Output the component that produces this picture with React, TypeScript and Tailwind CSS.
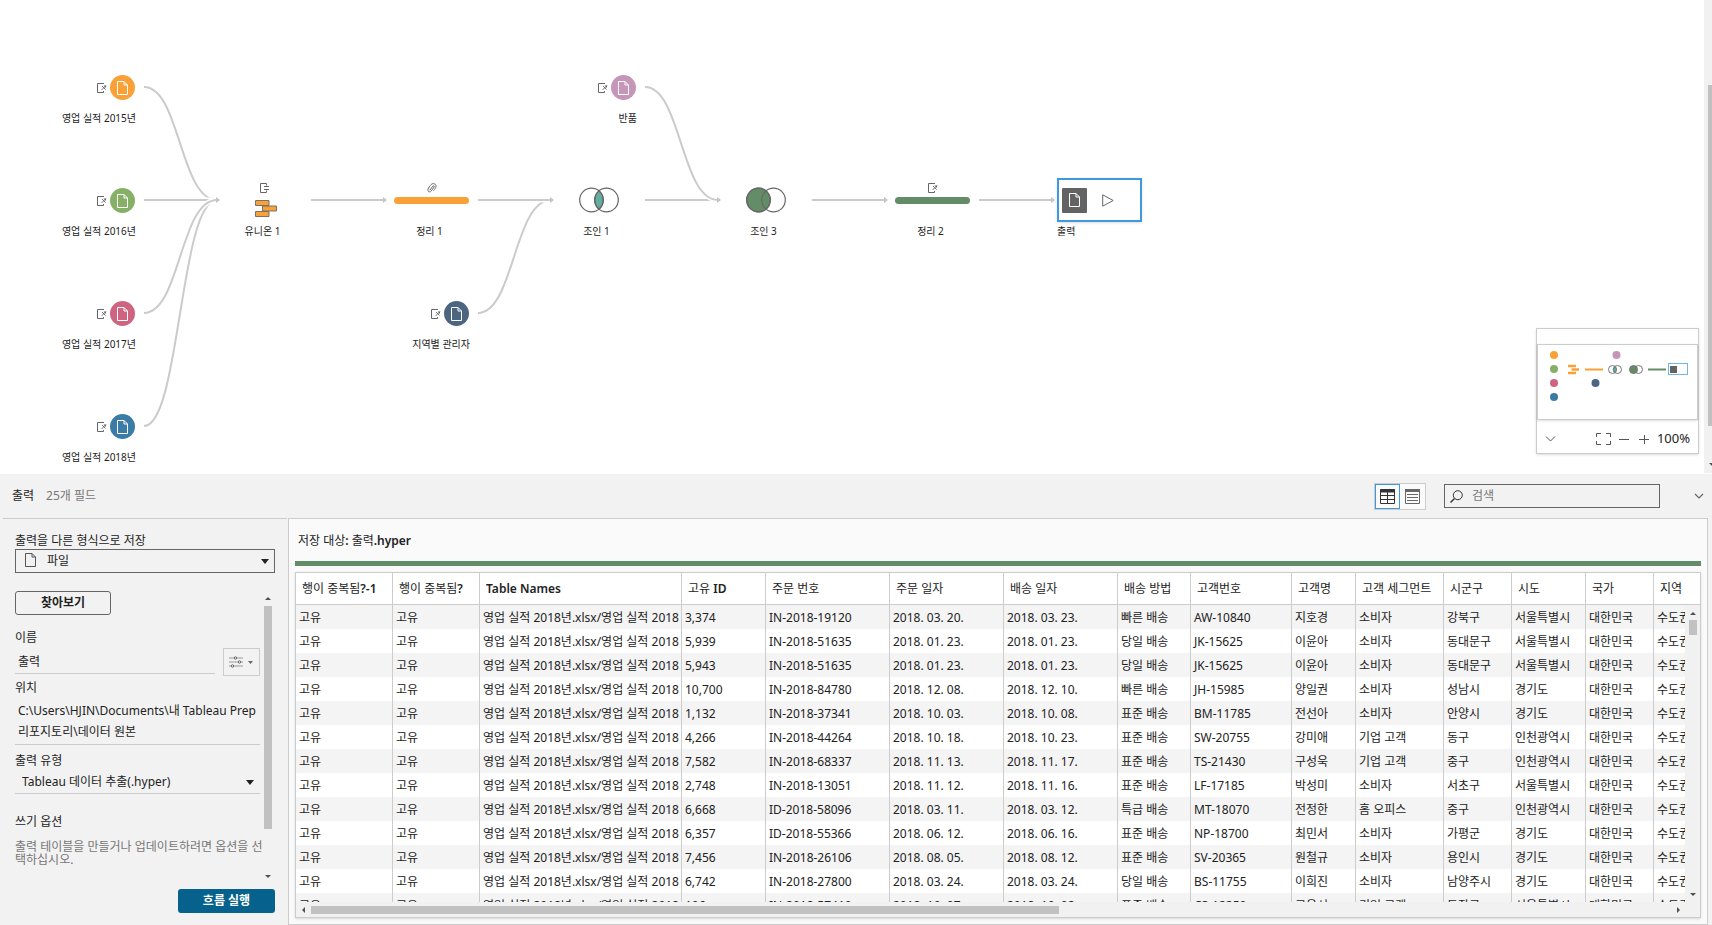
import { useState } from "react";
import type { ReactNode } from "react";
import clsx from "clsx";

type Badge = "edit" | "merge" | "clip";

const columns = [
  { name: "행이 중복됨?-1", width: "w-[97px]" },
  { name: "행이 중복됨?", width: "w-[87px]" },
  { name: "Table Names", width: "w-[202px]" },
  { name: "고유 ID", width: "w-[84px]" },
  { name: "주문 번호", width: "w-[124px]" },
  { name: "주문 일자", width: "w-[114px]" },
  { name: "배송 일자", width: "w-[114px]" },
  { name: "배송 방법", width: "w-[73px]" },
  { name: "고객번호", width: "w-[101px]" },
  { name: "고객명", width: "w-[64px]" },
  { name: "고객 세그먼트", width: "w-[88px]" },
  { name: "시군구", width: "w-[68px]" },
  { name: "시도", width: "w-[74px]" },
  { name: "국가", width: "w-[68px]" },
  { name: "지역", width: "w-[80px]" },
];

const orders = [
  ["3,374", "IN-2018-19120", "2018. 03. 20.", "2018. 03. 23.", "빠른 배송", "AW-10840", "지호경", "소비자", "강북구", "서울특별시"],
  ["5,939", "IN-2018-51635", "2018. 01. 23.", "2018. 01. 23.", "당일 배송", "JK-15625", "이윤아", "소비자", "동대문구", "서울특별시"],
  ["5,943", "IN-2018-51635", "2018. 01. 23.", "2018. 01. 23.", "당일 배송", "JK-15625", "이윤아", "소비자", "동대문구", "서울특별시"],
  ["10,700", "IN-2018-84780", "2018. 12. 08.", "2018. 12. 10.", "빠른 배송", "JH-15985", "양일권", "소비자", "성남시", "경기도"],
  ["1,132", "IN-2018-37341", "2018. 10. 03.", "2018. 10. 08.", "표준 배송", "BM-11785", "전선아", "소비자", "안양시", "경기도"],
  ["4,266", "IN-2018-44264", "2018. 10. 18.", "2018. 10. 23.", "표준 배송", "SW-20755", "강미애", "기업 고객", "동구", "인천광역시"],
  ["7,582", "IN-2018-68337", "2018. 11. 13.", "2018. 11. 17.", "표준 배송", "TS-21430", "구성욱", "기업 고객", "중구", "인천광역시"],
  ["2,748", "IN-2018-13051", "2018. 11. 12.", "2018. 11. 16.", "표준 배송", "LF-17185", "박성미", "소비자", "서초구", "서울특별시"],
  ["6,668", "ID-2018-58096", "2018. 03. 11.", "2018. 03. 12.", "특급 배송", "MT-18070", "전정한", "홈 오피스", "중구", "인천광역시"],
  ["6,357", "ID-2018-55366", "2018. 06. 12.", "2018. 06. 16.", "표준 배송", "NP-18700", "최민서", "소비자", "가평군", "경기도"],
  ["7,456", "IN-2018-26106", "2018. 08. 05.", "2018. 08. 12.", "표준 배송", "SV-20365", "원철규", "소비자", "용인시", "경기도"],
  ["6,742", "IN-2018-27800", "2018. 03. 24.", "2018. 03. 24.", "당일 배송", "BS-11755", "이희진", "소비자", "남양주시", "경기도"],
  ["196", "IN-2018-57410", "2018. 10. 07.", "2018. 10. 08.", "표준 배송", "CS-12250", "고윤서", "기업 고객", "동작구", "서울특별시"],
];

const sources: { label: string; pos: string; color: string }[] = [
  { label: "영업 실적 2015년", pos: "left-[56px] top-[75px]", color: "bg-[#f9a137]" },
  { label: "영업 실적 2016년", pos: "left-[56px] top-[188px]", color: "bg-[#86b067]" },
  { label: "영업 실적 2017년", pos: "left-[56px] top-[301px]", color: "bg-[#ce647f]" },
  { label: "영업 실적 2018년", pos: "left-[56px] top-[414px]", color: "bg-[#3b7ca7]" },
  { label: "지역별 관리자", pos: "left-[390px] top-[301px]", color: "bg-[#4c6580]" },
  { label: "반품", pos: "left-[557px] top-[75px]", color: "bg-[#c596b7]" },
];

// Later edges sit on top and cut a white gap into the ones below
const edges = [
  "M144 426C180 426 180 200 217 200",
  "M144 87C180 87 180 200 217 200",
  "M144 200H217",
  "M144 313C180 313 180 200 217 200",
  "M311 200H384",
  "M478 313C514 313 514 200 551 200",
  "M478 200H551",
  "M645 200H718",
  "M645 87C681 87 681 200 718 200",
  "M812 200H885",
  "M979 200H1052",
];

const arrows = [216, 383, 550, 717, 884, 1051];

function PageIcon({ className }: { className?: string }) {
  return (
    <svg className={className} width="11" height="14" viewBox="0 0 11 14" fill="none" stroke="currentColor" strokeWidth="1">
      <path d="M.5.5H7L10.500 4V13.500H.5z" />
      <path d="M7 .5V4H10.500" />
    </svg>
  );
}

function BadgeIcon({ kind }: { kind: Badge }) {
  if (kind === "clip") {
    return (
      <svg width="10" height="10" viewBox="0 0 10 10" fill="none" stroke="#666" strokeWidth="1" strokeLinecap="round">
        <path d="M3 6.800L5.800 3.200C6.500 2.300 7.700 3.200 7 4.100L4.200 8C3 9.700.2 8.700 1 6.200C1.300 5 3.200 2.500 4.200 1.500C6 -.3 9.300.8 9 3.500C8.900 4.600 7.800 6.200 6.800 7.300" />
      </svg>
    );
  }
  return (
    <svg width="10" height="10" viewBox="0 0 10 10" fill="none" stroke="#666" strokeWidth="1">
      {kind === "merge" ? (
        <path d="M6.500 2.500V.5H.5V9.500H6.500V7.500M4 3.500H9M4 6.500H9" />
      ) : (
        <>
          <path d="M7 .5H.5V9.500H6.500V8" />
          <path d="M5 3L8.500 6.500M9 2.500L4.500 7" strokeWidth=".9" />
          <path d="M6.500 2.500H9V5z" fill="#666" stroke="none" />
        </>
      )}
    </svg>
  );
}

function SourceNode({ label, pos, color }: { label: string; pos: string; color: string }) {
  return (
    <button className={clsx("absolute flex w-20 flex-col items-end", pos)}>
      <span className="mr-px flex items-center gap-[3px]">
        <BadgeIcon kind="edit" />
        <span className={clsx("flex size-[25px] items-center justify-center rounded-full text-white", color)}>
          <PageIcon />
        </span>
      </span>
      <span className="mt-2.5 text-[10px] leading-4 whitespace-nowrap">{label}</span>
    </button>
  );
}

function StepNode({ label, pos, badge, children }: { label: string; pos: string; badge?: Badge; children: ReactNode }) {
  return (
    <button className={clsx("absolute flex w-[75px] flex-col items-center", pos)}>
      {badge && <BadgeIcon kind={badge} />}
      <span className={clsx("flex w-full justify-center", badge ? "h-[30px]" : "h-9")}>{children}</span>
      <span className="pr-1 text-[10px] leading-4 whitespace-nowrap">{label}</span>
    </button>
  );
}

function Venn({ inner }: { inner?: boolean }) {
  return (
    <svg width="40" height="26" viewBox="0 0 40 26" fill="none" stroke="#666" strokeWidth="1.2">
      {!inner && <circle cx="12.500" cy="13" r="11.800" fill="#638d66" />}
      {inner && <path d="M20 3.900A11.800 11.800 0 0 1 20 22.100A11.800 11.800 0 0 1 20 3.900z" fill="#62ae9f" />}
      <circle cx="12.500" cy="13" r="11.800" />
      <circle cx="27.500" cy="13" r="11.800" />
    </svg>
  );
}

function Minimap() {
  return (
    <div className="absolute right-[13px] bottom-5 w-[163px] border border-[#ccc] bg-white shadow-sm">
      <div className="mt-[15px] border border-[#ccc] shadow-sm">
        <svg className="block w-full" height="74" viewBox="0 0 159 74" fill="none">
          <circle cx="16" cy="10" r="4" fill="#f9a137" />
          <circle cx="16" cy="24" r="4" fill="#86b067" />
          <circle cx="16" cy="38" r="4" fill="#ce647f" />
          <circle cx="16" cy="52" r="4" fill="#3b7ca7" />
          <circle cx="78.500" cy="10" r="4" fill="#c596b7" />
          <circle cx="57.500" cy="38" r="4" fill="#4c6580" />
          <path d="M30 21H38M33.500 24.500H41M30 28H38" stroke="#f9a137" strokeWidth="2.400" />
          <path d="M47 24.500H65" stroke="#f9a137" strokeWidth="2" />
          <path d="M110 24.500H128" stroke="#638d66" strokeWidth="2" />
          <path d="M76.800 21A4 4 0 0 1 76.800 28A4 4 0 0 1 76.800 21z" fill="#62ae9f" />
          <circle cx="95.500" cy="24.500" r="4" fill="#638d66" />
          <g stroke="#777">
            <circle cx="74.500" cy="24.500" r="4" />
            <circle cx="79.500" cy="24.500" r="4" />
            <circle cx="95.500" cy="24.500" r="4" />
            <circle cx="100.500" cy="24.500" r="4" />
          </g>
          <rect x="130.500" y="18.500" width="19" height="11" fill="#fff" stroke="#6fb5ea" />
          <rect x="132" y="21" width="7" height="7" fill="#636363" />
        </svg>
      </div>
      <div className="flex h-[33px] items-center px-2 pt-1 text-[#555]">
        <button aria-label="접기">
          <svg width="11" height="8" viewBox="0 0 11 8" fill="none" stroke="currentColor"><path d="M1 1.500L5.500 6L10 1.500" /></svg>
        </button>
        <button aria-label="화면에 맞추기" className="ml-auto">
          <svg width="15" height="12" viewBox="0 0 15 12" fill="none" stroke="currentColor">
            <path d="M.5 4V.5H5M10 .5H14.500V4M14.500 8V11.500H10M5 11.500H.5V8" />
          </svg>
        </button>
        <button aria-label="축소" className="ml-2">
          <svg width="10" height="10" viewBox="0 0 10 10" stroke="currentColor"><path d="M0 5.500H10" /></svg>
        </button>
        <button aria-label="확대" className="ml-2.5">
          <svg width="10" height="10" viewBox="0 0 10 10" stroke="currentColor"><path d="M0 5.500H10M5.500 1V10" /></svg>
        </button>
        <span className="ml-2 text-[13px] text-[#222]">100%</span>
      </div>
    </div>
  );
}

function FlowCanvas() {
  return (
    <section className="relative min-h-[470px] grow overflow-hidden bg-white">
      <svg className="absolute top-0 left-0" width="1200" height="470" fill="none">
        {edges.map((d) => (
          <g key={d}>
            <path d={d} stroke="#fff" strokeWidth="5" />
            <path d={d} stroke="#cbcbcb" strokeWidth="2" />
          </g>
        ))}
        {arrows.map((x) => (
          <path key={x} d={`M${x} 197L${x + 4} 200L${x} 203z`} fill="#c4c4c4" />
        ))}
      </svg>

      {sources.map((s) => (
        <SourceNode key={s.label} {...s} />
      ))}

      <StepNode label="유니온 1" pos="left-[227px] top-[183px]" badge="merge">
        <svg className="mt-[7px] ml-0.5" width="22" height="17" viewBox="0 0 22 17" fill="#f9a137" stroke="#77736b">
          <path d="M.5.500H14V5.500H.5zM.5 11.500H14V16.500H.5zM7.500 6H21.500V11H7.500z" />
        </svg>
      </StepNode>
      <StepNode label="정리 1" pos="left-[394px] top-[183px]" badge="clip">
        <span className="mt-1 h-[7px] w-full rounded-full bg-[#f9a137]" />
      </StepNode>
      <StepNode label="조인 1" pos="left-[561px] top-[187px]">
        <Venn inner />
      </StepNode>
      <StepNode label="조인 3" pos="left-[728px] top-[187px]">
        <Venn />
      </StepNode>
      <StepNode label="정리 2" pos="left-[895px] top-[183px]" badge="edit">
        <span className="mt-1 h-[7px] w-full rounded-full bg-[#638d66]" />
      </StepNode>

      {/* Output step, selected */}
      <div className="absolute top-[178px] left-[1057px]">
        <div className="flex h-11 w-[85px] items-center border-2 border-[#3e99de] bg-white pl-[3px] shadow">
          <span className="flex size-[25px] items-center justify-center rounded-[1px] bg-[#636363] text-white">
            <PageIcon />
          </span>
          <button aria-label="흐름 실행" className="ml-[15px]">
            <svg width="12" height="13" viewBox="0 0 12 13" fill="none" stroke="#666"><path d="M.7.800L11.200 6.500L.7 12.200z" /></svg>
          </button>
        </div>
        <span className="block text-[10px] leading-[18px]">출력</span>
      </div>

      <Minimap />

      {/* Scroll bar */}
      <div className="absolute top-0 right-0 bottom-px w-2 bg-[#f1f1f1]">
        <div className="absolute top-[85px] right-0 bottom-[47px] w-1 bg-[#c1c1c1]" />
        <svg className="absolute right-0 bottom-1.5" width="3" height="4" fill="#505050"><path d="M0 0H3V3z" /></svg>
      </div>
    </section>
  );
}

function Caret({ className }: { className?: string }) {
  return (
    <svg className={className} width="8" height="5" viewBox="0 0 8 5" fill="currentColor">
      <path d="M0 0H8L4 5z" />
    </svg>
  );
}

// Hangul stays regular, Latin runs are set heavier
function Title({ text }: { text: string }) {
  return text.split(/([\x21-\x7e]+)/).map((part, i) => (i % 2 ? <span key={i} className="font-semibold">{part}</span> : part));
}

function Sidebar() {
  const [name, setName] = useState("출력");
  return (
    <aside className="w-[284px] shrink-0 border-t border-[#ccc] p-3">
      <label htmlFor="save-as" className="block pt-0.5 leading-4">출력을 다른 형식으로 저장</label>
      <div className="relative">
        <select id="save-as" className="block h-6 w-full appearance-none border border-[#666] pl-[31px] outline-none">
          <option>파일</option>
        </select>
        <PageIcon className="absolute top-1 left-2.5 text-[#555]" />
        <Caret className="absolute top-2.5 right-1.5" />
      </div>

      <div className="mt-[18px] flex">
        <div className="min-w-0 grow pb-[18px]">
          <button className="block h-6 w-24 rounded-[3px] border border-[#666] font-bold">찾아보기</button>
          <label htmlFor="name" className="mt-3 block pt-px leading-5">이름</label>
          <div className="flex items-start justify-between gap-2">
            <input
              id="name"
              value={name}
              onChange={(e) => setName(e.target.value)}
              className="h-[26px] min-w-0 grow border-b border-[#ccc] px-[3px] outline-none"
            />
            <button aria-label="매개 변수" className="flex h-7 w-[37px] items-center justify-between border border-[#ccc] pr-1.5 pl-[5px] text-[#666]">
              <svg width="14" height="12" viewBox="0 0 14 12" fill="#f2f2f2" stroke="currentColor">
                <path d="M0 2H14M0 6H14M0 10H14" stroke="#999" />
                <circle cx="6.500" cy="2" r="1.200" />
                <circle cx="10.500" cy="6" r="1.200" />
                <circle cx="3.500" cy="10" r="1.200" />
              </svg>
              <svg width="5" height="3" fill="currentColor"><path d="M0 0H5L2.500 3z" /></svg>
            </button>
          </div>
          <h3 className="mt-0.5 leading-5">위치</h3>
          <p className="mt-0.5 border-b border-[#ccc] pb-0.5 pl-[3px] leading-[21px]">
            C:\Users\HJIN\Documents\내 Tableau Prep 리포지토리\데이터 원본
          </p>
          <label htmlFor="type" className="mt-1.5 block leading-5">출력 유형</label>
          <div className="relative">
            <select id="type" className="block h-[23px] w-full appearance-none border-b border-[#ccc] pl-[7px] outline-none">
              <option>Tableau 데이터 추출(.hyper)</option>
            </select>
            <Caret className="absolute top-[9px] right-1.5" />
          </div>
          <h3 className="mt-[18px] leading-5">쓰기 옵션</h3>
          <p className="mt-2 -mr-1 leading-[13px] break-all text-[#767676]">출력 테이블을 만들거나 업데이트하려면 옵션을 선택하십시오.</p>
        </div>
        <div className="flex w-[15px] shrink-0 flex-col items-center justify-between py-1.5">
          <svg width="6" height="3" fill="#505050"><path d="M0 3L3 0L6 3z" /></svg>
          <div className="mt-1.5 mb-auto h-[223px] w-2 bg-[#c1c1c1]" />
          <svg width="6" height="3" fill="#505050"><path d="M0 0H6L3 3z" /></svg>
        </div>
      </div>
      <button className="mt-[5px] ml-auto block h-6 w-[97px] rounded-[3px] bg-[#06628c] font-bold text-white">흐름 실행</button>
    </aside>
  );
}

function DataGrid() {
  return (
    <div className="flex h-0 grow flex-col border border-[#ccc] bg-white shadow">
      <div className="relative h-0 grow overflow-hidden">
        <table className="w-max border-separate border-spacing-0 text-left">
          <thead>
            <tr>
              {columns.map((c) => (
                <th
                  key={c.name}
                  className={clsx("h-8 border-r border-b border-[#ccc] py-0 pr-0 pl-1.5 font-normal whitespace-nowrap", c.width)}
                >
                  <Title text={c.name} />
                </th>
              ))}
            </tr>
          </thead>
          <tbody>
            {orders.map((order, i) => (
              <tr key={i} className="odd:bg-[#f4f4f4]">
                {["고유", "고유", "영업 실적 2018년.xlsx/영업 실적 2018", ...order, "대한민국", "수도권"].map((value, j) => (
                  <td key={j} className="h-6 max-w-0 overflow-hidden border-r border-[#ccc] pt-0.5 pr-0 pb-0 pl-[3px] whitespace-nowrap">
                    {value}
                  </td>
                ))}
              </tr>
            ))}
          </tbody>
        </table>
        <div className="absolute top-8 right-0 bottom-0 flex w-[15px] flex-col items-center bg-[#f1f1f1] pt-[7px] pb-1.5">
          <svg width="6" height="3" fill="#505050"><path d="M0 3L3 0L6 3z" /></svg>
          <div className="mt-[5px] mb-auto h-[15px] w-2 bg-[#c1c1c1]" />
          <svg width="6" height="3" fill="#505050"><path d="M0 0H6L3 3z" /></svg>
        </div>
      </div>
      <div className="flex h-[15px] items-center bg-[#f1f1f1] pr-5 pl-1.5">
        <svg width="3" height="6" fill="#505050"><path d="M3 0L0 3L3 6z" /></svg>
        <div className="mx-1.5 grow">
          <div className="h-2 w-[55%] bg-[#c1c1c1]" />
        </div>
        <svg width="3" height="6" fill="#505050"><path d="M0 0L3 3L0 6z" /></svg>
      </div>
    </div>
  );
}

export default function App() {
  return (
    <div className="flex min-h-screen flex-col bg-white font-['Noto_Sans','Noto_Sans_CJK_KR',sans-serif] text-xs text-[#222]">
      <FlowCanvas />

      <section className="bg-[#f2f2f2]">
        <header className="flex h-11 items-center pr-2 pl-3">
          <h2>출력</h2>
          <span className="ml-3 text-[#767676]">25개 필드</span>
          <div className="ml-auto flex border border-[#ccc] bg-[#fafafa]">
            <button aria-label="데이터 그리드" className="flex size-[25px] items-center justify-center border border-[#3e99de] text-[#333]">
              <svg width="15" height="15" viewBox="0 0 15 15" fill="none" stroke="currentColor">
                <path d="M.5.5H14.500V14.500H.5zM7.500 3V14M0 6.500H15M0 10.500H15" />
                <path d="M0 2H15" strokeWidth="3" />
              </svg>
            </button>
            <button aria-label="목록" className="flex size-[25px] items-center justify-center text-[#666]">
              <svg width="15" height="15" viewBox="0 0 15 15" fill="none" stroke="currentColor">
                <path d="M.5.5H14.500V14.500H.5zM2 5.500H13M2 8.500H13M2 11.500H13" />
                <path d="M0 1.500H15" strokeWidth="3" />
              </svg>
            </button>
          </div>
          <label className="ml-[18px] flex h-6 w-[216px] items-center border border-[#666] pl-[5px]">
            <svg width="13" height="13" viewBox="0 0 13 13" fill="none" stroke="#333">
              <circle cx="7.800" cy="5.200" r="4.500" />
              <path d="M4.500 8.500L.5 12.500" strokeWidth="1.400" />
            </svg>
            <input type="search" aria-label="검색" placeholder="검색" className="ml-[9px] min-w-0 grow outline-none placeholder:text-[#767676]" />
          </label>
          <button aria-label="창 접기" className="ml-[34px] text-[#666]">
            <svg width="10" height="7" viewBox="0 0 10 7" fill="none" stroke="currentColor" strokeWidth="1.200"><path d="M1 1L5 5L9 1" /></svg>
          </button>
        </header>

        <div className="flex gap-px pr-1 pl-[3px]">
          <Sidebar />
          <div className="flex min-w-0 grow flex-col border border-[#ccc] bg-[#fafafa] px-1.5 pb-1.5">
            <h3 className="pt-3 pl-[3px] leading-5">
              <Title text="저장 대상: 출력.hyper" />
            </h3>
            <div className="mt-2.5 mb-1.5 h-[5px] shrink-0 bg-[#638d66]" />
            <DataGrid />
          </div>
        </div>
      </section>
    </div>
  );
}
